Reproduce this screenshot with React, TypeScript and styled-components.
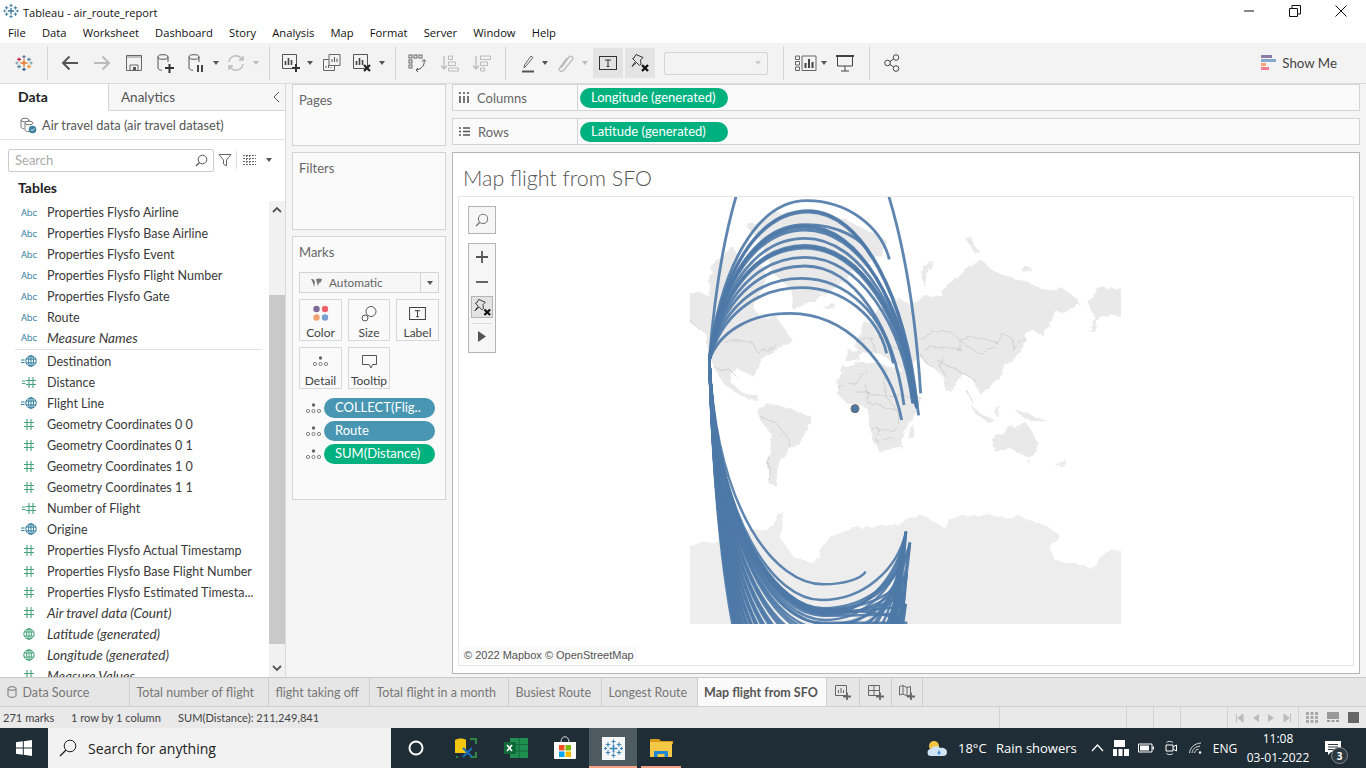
import React from "react";
import styled, { createGlobalStyle } from "styled-components";

const Global = createGlobalStyle`
  html, body { margin: 0; padding: 0; width: 1366px; height: 768px; overflow: hidden; background: #fff; }
  * { box-sizing: border-box; }
`;
const UI = `"Open Sans", "Noto Sans", sans-serif`;
const TB = `Lato, "Open Sans", sans-serif`;

const Page = styled.div`display:flex;flex-direction:column;width:1366px;height:768px;font-family:${TB};color:#333;overflow:hidden;`;
const TitleBar = styled.div`height:21px;flex:none;display:flex;align-items:center;padding-left:3px;font:11.1px ${UI};color:#111;background:#fff;`;
const TitleText = styled.span`margin-left:4px;margin-top:4px;`;
const WinButtons = styled.div`margin-left:auto;margin-right:2px;display:flex;`;
const WinButton = styled.div`width:46px;height:21px;display:flex;align-items:center;justify-content:center;`;
const MenuBar = styled.div`height:22px;flex:none;display:flex;align-items:center;padding-left:8px;gap:16.2px;font:11.2px ${UI};color:#111;background:#fff;`;
const Toolbar = styled.div`height:41px;flex:none;display:flex;align-items:center;padding-left:8px;background:#f3f3f3;border-bottom:1px solid #dcdcdc;`;
const ToolSlot = styled.div<{ $w: number; $ml?: number; $hi?: boolean }>`
  width:${p => p.$w}px;height:30px;flex:none;display:flex;align-items:center;justify-content:center;
  margin-left:${p => p.$ml ?? 0}px;background:${p => (p.$hi ? "#e3e3e3" : "transparent")};
`;
const ToolDivider = styled.div<{ $ml?: number; $mr?: number }>`
  width:1px;height:34px;flex:none;background:#d4d4d4;margin-left:${p => p.$ml ?? 0}px;margin-right:${p => p.$mr ?? 0}px;
`;
const Caret = styled.span<{ $c?: string }>`display:block;width:0;height:0;border-left:3.5px solid transparent;border-right:3.5px solid transparent;border-top:4px solid ${p => p.$c ?? "#555"};`;
const Combo = styled.div`width:104px;height:23px;flex:none;margin-left:9px;border:1px solid #d5d5d5;border-radius:2px;background:#f3f3f3;display:flex;align-items:center;justify-content:flex-end;padding-right:6px;`;
const ShowMe = styled.div`margin-left:auto;margin-right:29px;display:flex;align-items:center;gap:6px;font:13.3px ${TB};color:#444;`;

const Main = styled.div`flex:1;min-height:0;display:flex;background:#f5f5f5;`;
const Sidebar = styled.div`width:286px;flex:none;background:#fff;border-right:1px solid #dadada;display:flex;flex-direction:column;`;
const SideTabs = styled.div`height:27px;flex:none;display:flex;`;
const SideTab = styled.div<{ $on?: boolean }>`
  width:${p => (p.$on ? 108 : 177)}px;display:flex;align-items:center;position:relative;padding-bottom:${p => (p.$on ? 2 : 0)}px;
  padding-left:${p => (p.$on ? 18 : 12)}px;font:${p => (p.$on ? 700 : 400)} ${p => (p.$on ? 14 : 13.5)}px ${TB};
  color:${p => (p.$on ? "#222" : "#555")};background:${p => (p.$on ? "#fff" : "#f6f6f6")};
  border-left:${p => (p.$on ? "none" : "1px solid #d4d4d4")};border-bottom:${p => (p.$on ? "none" : "1px solid #d4d4d4")};
`;
const Collapse = styled.svg`position:absolute;right:5px;top:7px;`;
const SourceRow = styled.div`height:29px;flex:none;display:flex;align-items:center;padding-left:20px;gap:5px;font:12.8px ${TB};color:#555;border-bottom:1px solid #e2e2e2;`;
const SearchRow = styled.div`height:22px;flex:none;margin-top:9px;display:flex;align-items:center;padding-left:8px;`;
const SearchBox = styled.div`width:206px;height:23px;border:1px solid #ccc;border-radius:2px;display:flex;align-items:center;justify-content:space-between;padding:0 5px 0 6px;font:13px ${TB};color:#aaa;`;
const FilterSlot = styled.div`width:22px;display:flex;justify-content:center;`;
const VBar = styled.div`width:1px;height:18px;background:#ddd;`;
const ViewSlot = styled.div`margin-left:6px;display:flex;align-items:center;gap:10px;`;
const TablesHead = styled.div`height:30px;flex:none;padding:8px 0 0 18px;font:700 14px ${TB};color:#222;`;
const ListArea = styled.div`flex:1;min-height:0;display:flex;overflow:hidden;`;
const FieldList = styled.div`width:269px;flex:none;overflow:hidden;`;
const FieldRow = styled.div<{ $it?: boolean }>`
  height:21px;display:flex;align-items:center;padding-top:${p => (p.$it ? 0 : 1)}px;
  font:${p => (p.$it ? "italic 13.6px" : "12.55px")} ${TB};color:#3a3a3a;white-space:nowrap;
`;
const FieldIcon = styled.div`width:47px;flex:none;padding-left:19px;display:flex;align-items:center;justify-content:center;padding-right:8px;`;
const Abc = styled.span`font:9.5px ${UI};color:#2f7d9c;letter-spacing:-.1px;`;
const ListDivider = styled.div`height:1px;margin:1px 7px 0 15px;background:#e2e2e2;`;
const ScrollBar = styled.div`width:16px;flex:none;background:#f1f1f1;display:flex;flex-direction:column;`;
const ScrollEnd = styled.div`height:17px;flex:none;display:flex;align-items:center;justify-content:center;`;
const ScrollGap = styled.div`height:77px;flex:none;`;
const ScrollThumb = styled.div`height:349px;flex:none;background:#c9c9c9;`;
const ScrollFill = styled.div`flex:1;`;

const Shelves = styled.div`width:154px;flex:none;margin-left:6px;display:flex;flex-direction:column;gap:6px;`;
const Card = styled.div<{ $h: number }>`height:${p => p.$h}px;flex:none;border:1px solid #d4d4d4;background:#fafafa;padding:8px 6px;font:13px ${TB};color:#666;`;
const CardTitle = styled.div`height:15px;line-height:15px;`;
const MarkSelect = styled.div`height:21px;margin-top:12px;width:140px;border:1px solid #d4d4d4;background:#f7f7f7;display:flex;align-items:center;font-size:11.8px;color:#666;`;
const MarkSelectLabel = styled.div`flex:1;display:flex;align-items:center;gap:6px;padding-left:11px;height:100%;border-right:1px solid #d4d4d4;`;
const MarkSelectArrow = styled.div`width:17px;display:flex;justify-content:center;`;
const MarkGrid = styled.div`margin-top:6px;display:grid;grid-template-columns:43px 42px 43px;column-gap:6px;row-gap:6px;width:140px;`;
const MarkBtn = styled.div`height:42px;border:1px solid #d8d8d8;background:#fafafa;display:flex;flex-direction:column;align-items:center;padding-top:4px;font:12px ${TB};color:#444;gap:2px;`;
const MarkIcon = styled.div`height:20px;display:flex;align-items:center;justify-content:center;`;
const PillList = styled.div`margin-top:9px;display:flex;flex-direction:column;gap:3px;`;
const PillRow = styled.div`display:flex;align-items:center;height:20px;`;
const PillDots = styled.div`width:25px;flex:none;display:flex;justify-content:center;padding-left:3px;`;
const Pill = styled.div<{ $g?: boolean; $w?: number }>`
  width:${p => (p.$w ? `${p.$w}px` : "111px")};height:20px;border-radius:10px;color:#fff;
  background:${p => (p.$g ? "#00b180" : "#4996b2")};font:13px ${TB};line-height:19px;padding-left:11px;white-space:nowrap;overflow:hidden;
`;
const ShelfPill = styled(Pill)`margin-top:1px;`;

const Right = styled.div`width:908px;flex:none;margin-left:6px;display:flex;flex-direction:column;gap:7px;`;
const Shelf = styled.div`height:27px;flex:none;display:flex;align-items:center;border:1px solid #d4d4d4;background:#fafafa;`;
const ShelfLabel = styled.div`width:125px;height:100%;flex:none;display:flex;align-items:center;gap:8px;padding-left:6px;font:13px ${TB};color:#666;border-right:1px solid #d4d4d4;margin-right:2px;`;
const Viz = styled.div`height:522px;flex:none;border:1px solid #b5b5b5;background:#fff;padding:0 5px 7px 5px;display:flex;flex-direction:column;`;
const VizTitle = styled.div`height:43px;flex:none;padding:12px 0 0 5px;font:300 21.4px ${TB};color:#555;line-height:26px;`;
const Pane = styled.div`flex:1;min-height:0;border:1px solid #e6e6e6;position:relative;overflow:hidden;`;
const MapSvg = styled.svg`display:block;`;
const Land = styled.polygon<{ $s?: boolean }>`fill:${p => (p.$s ? "#ededed" : "#e9e9e9")};`;
const Border = styled.polyline`fill:none;stroke:#c6c6c6;stroke-width:2;`;
const Arc = styled.path<{ $w?: number }>`fill:none;stroke:#4e79a7;stroke-width:${p => p.$w ?? 8.5};opacity:.9;`;
const ControlBtn = styled.div`position:absolute;left:9px;top:9px;width:28px;height:28px;border:1px solid #b5b5b5;background:#f6f6f6;display:flex;align-items:center;justify-content:center;`;
const ControlStack = styled.div`position:absolute;left:9px;top:46px;width:28px;height:110px;border:1px solid #b5b5b5;background:#f6f6f6;display:flex;flex-direction:column;align-items:center;`;
const CtlCell = styled.div`height:25px;display:flex;align-items:center;justify-content:center;flex:none;`;
const CtlPin = styled.div`width:22px;height:22px;flex:none;margin-top:2px;border:1px solid #b5b5b5;background:#e3e3e3;display:flex;align-items:center;justify-content:center;`;
const CtlSep = styled.div`width:20px;height:1px;background:#ddd;margin-top:5px;flex:none;`;
const Attribution = styled.div`position:absolute;left:2px;bottom:2px;padding:2px 3px;background:rgba(250,250,250,.9);font:500 11px "Liberation Sans",Arial,sans-serif;color:#555;`;

const TabBar = styled.div`height:30px;flex:none;display:flex;background:#e6e6e6;border-top:1px solid #c9c9c9;border-bottom:1px solid #d2d2d2;`;
const SheetTab = styled.div<{ $w: number; $on?: boolean }>`
  width:${p => p.$w}px;flex:none;display:flex;align-items:center;gap:6px;padding-left:${p => (p.$on ? 6 : 6.5)}px;white-space:nowrap;
  font:${p => (p.$on ? 700 : 400)} 12.5px ${TB};color:${p => (p.$on ? "#555" : "#777")};
  background:${p => (p.$on ? "#fafafa" : "transparent")};border-right:1px solid #cfcfcf;
`;
const AddTab = styled.div<{ $w: number }>`width:${p => p.$w}px;flex:none;display:flex;align-items:center;justify-content:center;border-right:1px solid #cfcfcf;`;
const StatusBar = styled.div`height:21px;flex:none;display:flex;align-items:center;background:#e9e9e9;font:11.1px ${TB};color:#444;`;
const StatusText = styled.span<{ $w: number; $pl?: number }>`width:${p => p.$w}px;flex:none;white-space:nowrap;padding-left:${p => p.$pl ?? 0}px;`;
const StatusCell = styled.div<{ $w: number }>`width:${p => p.$w}px;height:100%;flex:none;border-left:1px solid #d2d2d2;display:flex;align-items:center;justify-content:center;gap:9px;`;
const Taskbar = styled.div`height:40px;flex:none;display:flex;align-items:stretch;background:#1f2e36;color:#fff;font:13px ${UI};`;
const TaskSlot = styled.div<{ $w: number; $on?: boolean; $u?: boolean }>`
  width:${p => p.$w}px;flex:none;display:flex;align-items:center;justify-content:center;position:relative;
  background:${p => (p.$on ? "#4e5c62" : "transparent")};
  &::after{content:"";display:${p => (p.$u ? "block" : "none")};position:absolute;left:${p => (p.$on ? 0 : 4)}px;right:${p => (p.$on ? 0 : 4)}px;bottom:0;height:2px;background:#f7a184;}
`;
const TaskSearch = styled.div`width:343px;flex:none;background:#f2f2f2;color:#222;display:flex;align-items:center;gap:11px;padding-left:11px;font:14.1px ${UI};`;
const Tray = styled.div`margin-left:auto;display:flex;align-items:center;`;
const TrayText = styled.span<{ $w: number }>`width:${p => p.$w}px;flex:none;white-space:nowrap;`;
const TrayLang = styled.span`width:36px;margin-right:3px;flex:none;font-size:12px;text-align:center;`;
const TrayIcon = styled.div<{ $w: number; $mr?: number }>`width:${p => p.$w}px;flex:none;display:flex;align-items:center;justify-content:center;margin-right:${p => p.$mr ?? 0}px;`;
const Clock = styled.div`width:64px;flex:none;display:flex;flex-direction:column;align-items:center;font-size:12px;line-height:19px;white-space:nowrap;`;
const NotifSlot = styled.div`width:56px;height:40px;flex:none;padding-right:10px;display:flex;align-items:center;justify-content:center;position:relative;`;
const NotifBadge = styled.span`position:absolute;left:21px;top:19px;width:17px;height:17px;border-radius:50%;background:#2b3a41;border:1px solid #888;font:700 10px ${UI};display:flex;align-items:center;justify-content:center;`;

/* ---------- icons ---------- */
const Cross = ({ x, y, r, c, w = 1.2 }: { x: number; y: number; r: number; c: string; w?: number }) => (
  <path d={`M${x - r} ${y}H${x + r}M${x} ${y - r}V${y + r}`} stroke={c} strokeWidth={w} fill="none" />
);
const TableauLogo = ({ s = 16, mono }: { s?: number; mono?: string }) => {
  const c = (v: string) => mono ?? v;
  return (
    <svg width={s} height={s} viewBox="0 0 20 20">
      <Cross x={10} y={10} r={4} c={c("#e8762d")} w={1.7} />
      <Cross x={10} y={3} r={2} c={c("#5b6591")} />
      <Cross x={10} y={17} r={2} c={c("#1f457e")} />
      <Cross x={4.5} y={6} r={2.2} c={c("#c72037")} />
      <Cross x={15.5} y={6} r={2.2} c={c("#59879b")} />
      <Cross x={4.5} y={14} r={2.2} c={c("#5b879b")} />
      <Cross x={15.5} y={14} r={2.2} c={c("#eb912b")} />
      <Cross x={2} y={10} r={1.6} c={c("#7099a6")} />
      <Cross x={18} y={10} r={1.6} c={c("#7099a6")} />
    </svg>
  );
};
const Svg = ({ w = 20, h = 20, children, vb }: { w?: number; h?: number; vb?: string; children: React.ReactNode }) => (
  <svg width={w} height={h} viewBox={vb ?? `0 0 ${w} ${h}`} fill="none">{children}</svg>
);
const Back = ({ c }: { c: string }) => <Svg><path d="M18 10H3M9.5 3.5L3 10l6.5 6.5" stroke={c} strokeWidth="2" /></Svg>;
const Forward = ({ c }: { c: string }) => <Svg><path d="M2 10h15M10.5 3.5L17 10l-6.5 6.5" stroke={c} strokeWidth="2" /></Svg>;
const Save = () => <Svg><path d="M2.5 2.5h15v15h-15z" stroke="#666" /><path d="M3 4h14" stroke="#888" /><path d="M6 17v-5h8v5" stroke="#666" /><path d="M9 14h3v3H9z" fill="#555" /></Svg>;
const Cyl = ({ children }: { children?: React.ReactNode }) => (
  <Svg><ellipse cx="8" cy="4" rx="5" ry="2.3" stroke="#555" /><path d="M3 4v11c0 1.3 2 2.2 4 2.3M13 4v5" stroke="#555" />{children}</Svg>
);
const Refresh = () => <Svg><path d="M3 9a7 7 0 0 1 12-4l2 2M17 11a7 7 0 0 1-12 4l-2-2M17 3v4h-4M3 17v-4h4" stroke="#bbb" strokeWidth="1.4" /></Svg>;
const BarsPlus = ({ x }: { x?: boolean }) => (
  <Svg>
    <path d="M1.5 1.5h14v14h-14z" stroke="#555" />
    <path d="M4.5 12V8M7.5 12V5M10.5 12V7" stroke="#444" strokeWidth="1.6" />
    {x ? <path d="M12 12l6 6M18 12l-6 6" stroke="#222" strokeWidth="2.2" /> : <path d="M11 15h8M15 11v8" stroke="#333" strokeWidth="2" />}
  </Svg>
);
const Dup = () => <Svg><path d="M7 1.5h11v11H7z" stroke="#666" /><path d="M10 9V6M12.5 9V4M15 9V5.5" stroke="#555" /><path d="M7 6.5H1.5v11h11V13" stroke="#666" /><path d="M4 15v-2M6.5 15v-3M9 15v-1" stroke="#666" /></Svg>;
const Swap = () => <Svg>
  {[2, 7, 12].map(x => <rect key={x} x={x} y="2" width="3" height="3" stroke="#666" />)}
  <rect x="2" y="7" width="3" height="3" stroke="#666" />
  <rect x="2" y="12" width="3" height="3" stroke="#666" />
  <path d="M17 7c1 5-2 9-8 10" stroke="#555" /><path d="M15 8.500l2-2 2 2M11 15l-2 2 2 2" stroke="#555" />
</Svg>;
const Sort = ({ desc }: { desc?: boolean }) => <Svg>
  <path d="M4 3v13M1 12.500L4 16l3-3.500" stroke="#bbb" strokeWidth="1.3" />
  {desc
    ? <path d="M8.500 3h10v3.500h-10zM8.500 9h7v3.500h-7zM8.500 15h4v3h-4z" stroke="#bbb" />
    : <path d="M8.500 3h4v3.500h-4zM8.500 9h7v3.500h-7zM8.500 15h10v3h-10z" stroke="#bbb" />}
</Svg>;
const Pen = () => <Svg><path d="M8 13l-2 2 .5-3L13 3l2 1.500-7 8.500z" stroke="#666" /><path d="M4 18.500h12" stroke="#555" strokeWidth="2" /></Svg>;
const Clip = () => <Svg><path d="M6 15l8-11c1.500-2 5 0 3.500 2.500L9 17c-2 3-6 .5-4.500-2L12 5" stroke="#bbb" strokeWidth="1.3" /></Svg>;
const TBox = ({ s = 18 }: { s?: number }) => <Svg w={s} h={s - 4} vb="0 0 18 14"><rect x=".5" y=".5" width="17" height="13" stroke="#333" /><path d="M6 4h6M9 4v6.500M7.500 10.500h3" stroke="#333" /></Svg>;
const PinX = ({ s = 20 }: { s?: number }) => <Svg w={s} h={s} vb="0 0 20 20">
  <path d="M6 1.500l7 3-2.500 2.500.5 4-1.500 1.500-3-3-4.500 4 3.500-5-3-3L4 5z" stroke="#333" fill="none" />
  <path d="M12 12l6 6M18 12l-6 6" stroke="#111" strokeWidth="2.300" />
</Svg>;
const SmallShow = () => <Svg w={22} h={16}>
  <path d="M.5 1h4v3.500h-4zM.5 6.500h4V10h-4zM.5 12h4v3.500h-4z" stroke="#666" />
  <path d="M7 1h14v14.500H7z" stroke="#666" /><path d="M10.500 13V8M14 13V4M17.500 13V7" stroke="#444" strokeWidth="2" />
</Svg>;
const Present = () => <Svg w={20} h={18}><path d="M1 2h18" stroke="#444" strokeWidth="2" /><path d="M2.500 3v9h15V3M10 12v5M6 17h8" stroke="#444" /></Svg>;
const Share = () => <Svg w={16} h={18}><circle cx="3.500" cy="9" r="2.800" stroke="#444" /><circle cx="12" cy="3.500" r="2.800" stroke="#444" /><circle cx="12" cy="14.500" r="2.800" stroke="#444" /><path d="M6 7.500l3.500-2.500M6 10.500l3.500 2.500" stroke="#444" /></Svg>;
const ShowBars = () => <Svg w={15} h={16}><rect y="0" width="11" height="3" fill="#8b7ea6" /><rect y="4" width="15" height="3" fill="#87a9d0" /><rect y="8" width="5" height="3" fill="#f3a672" /><rect y="12" width="8" height="3" fill="#f5808c" /></Svg>;
const SourceIcon = () => <Svg w={17} h={17}>
  <ellipse cx="5" cy="3" rx="4" ry="1.800" stroke="#777" /><path d="M1 3v7c0 1 2 1.700 3 1.700M9 3v3" stroke="#777" />
  <ellipse cx="9" cy="6" rx="4" ry="1.800" stroke="#777" fill="#fff" /><path d="M5 6v7c0 1 2 1.700 4 1.700" stroke="#777" />
  <circle cx="12.500" cy="12.500" r="3.800" fill="#3d7fa1" /><path d="M10.800 12.500l1.300 1.300 2.200-2.300" stroke="#fff" />
</Svg>;
const Lens = ({ s = 13, c = "#555" }: { s?: number; c?: string }) => <Svg w={s} h={s} vb="0 0 13 13"><circle cx="7.500" cy="5.500" r="4.300" stroke={c} /><path d="M4.500 8.500L1 12" stroke={c} strokeWidth="1.300" /></Svg>;
const Funnel = () => <Svg w={14} h={14}><path d="M1 1.500h12L8.500 7v6l-3-2V7z" stroke="#666" /></Svg>;
const ListIco = () => <Svg w={13} h={10}><path d="M0 .5h13M0 3.500h13M0 6.500h13M0 9.500h13M3.500 0v10M6.500 0v10" stroke="#666" strokeDasharray="2 1" /></Svg>;
const Hash = () => <Svg w={10} h={11}><path d="M3 0v11M7 0v11M0 3.500h10M0 7.500h10" stroke="#47a37c" strokeWidth="1.100" /></Svg>;
const Globe = ({ c }: { c: string }) => <Svg w={12} h={12}><circle cx="6" cy="6" r="5.200" stroke={c} /><ellipse cx="6" cy="6" rx="2.400" ry="5.200" stroke={c} /><path d="M.8 4h10.400M.8 8h10.400M6 .8v10.400" stroke={c} /></Svg>;
const Eq = ({ c }: { c: string }) => <Svg w={4} h={5}><path d="M0 1h3.500M0 3.500h3.500" stroke={c} /></Svg>;
const Detail = () => <Svg w={15} h={11}><circle cx="7.500" cy="2" r="1.700" fill="#666" /><circle cx="2" cy="8" r="1.600" stroke="#666" strokeWidth=".8" /><circle cx="7.500" cy="8" r="1.600" stroke="#666" strokeWidth=".8" /><circle cx="13" cy="8" r="1.600" stroke="#666" strokeWidth=".8" /></Svg>;
const MapMini = () => <Svg w={12} h={10}><path d="M0 1l3 .5 1 3L3 9 2 5zM5 1l3-.5 3 .5-1 3-2 1-1 3-1-3z" fill="#777" /></Svg>;
const Dots = () => <Svg w={18} h={18}><circle cx="4.500" cy="4" r="3.200" fill="#7e6a97" /><circle cx="13" cy="4" r="3.200" fill="#f0616c" /><circle cx="4.500" cy="12.500" r="3.200" fill="#f0a270" /><circle cx="13" cy="12.500" r="3.200" fill="#7aa0cf" /></Svg>;
const SizeIco = () => <Svg w={16} h={17}><circle cx="10" cy="6.500" r="5" stroke="#555" /><circle cx="4" cy="13" r="3" stroke="#555" fill="#fafafa" /></Svg>;
const TipIco = () => <Svg w={15} h={14}><path d="M.5.500h14v9h-4l-1.500 3.500-2-3.500H.5z" stroke="#555" /></Svg>;
const Plus = ({ c = "#555", s = 12 }: { c?: string; s?: number }) => <Svg w={s} h={s}><path d={`M0 ${s / 2}H${s}M${s / 2} 0V${s}`} stroke={c} strokeWidth="1.800" /></Svg>;
const AddSheet = () => <Svg w={16} h={15}><path d="M.5.500h11v10H.5z" stroke="#666" /><path d="M3.500 8V5M6 8V3M8.500 8V5" stroke="#666" /><path d="M8 11.500h8M12 7.500v8" stroke="#666" strokeWidth="1.800" /></Svg>;
const AddDash = () => <Svg w={16} h={15}><path d="M.5.500h11v10H.5zM.5 5.500h11M6 .5v10" stroke="#666" /><path d="M8 11.500h8M12 7.500v8" stroke="#666" strokeWidth="1.800" /></Svg>;
const AddStory = () => <Svg w={16} h={15}><path d="M.5 1.500L4 .5l4 2 3.500-1V10l-3.500 1-4-2-3.500 1zM4 .5V9M8 2.500V11" stroke="#666" /><path d="M8 11.500h8M12 7.500v8" stroke="#666" strokeWidth="1.800" /></Svg>;
const Chev = ({ up }: { up?: boolean }) => <Svg w={10} h={7}><path d={up ? "M1 6l4-4 4 4" : "M1 1l4 4 4-4"} stroke="#555" strokeWidth="1.800" /></Svg>;

/* ---------- map data, in the 3x crop space ---------- */
const LAND: string[] = [
  "10,312 55,302 88,318 92,230 120,200 160,170 190,230 240,220 260,260 240,310 215,345 245,390 290,380 322,430 335,450 300,475 270,490 240,510 222,560 170,535 150,575 190,610 240,622 235,632 190,622 130,582 105,535 90,505 75,430 10,385",
  "340,360 335,300 280,250 240,150 200,110 290,70 400,60 500,90 620,150 600,200 520,250 470,290 400,330",
  "430,350 450,338 470,345 455,360",
  "495,512 500,485 530,480 525,450 545,430 540,410 570,395 590,365 620,335 660,325 690,345 730,315 790,320 780,300 820,270 850,240 900,205 930,235 990,265 1050,280 1090,300 1140,290 1190,325 1200,345 1170,365 1130,370 1110,400 1090,435 1060,420 1035,430 1030,470 1000,510 975,520 960,560 935,590 900,615 880,570 850,550 830,575 800,605 790,560 770,540 735,520 715,490 700,530 670,565 660,530 640,520 600,490 580,490 550,490 530,512",
  "1222,335 1250,295 1290,290 1340,300 1340,392 1295,372 1258,382 1240,412 1222,425 1245,385",
  "730,225 765,215 740,250 735,290 725,265",
  "860,150 870,133 880,165 905,190 880,185",
  "1020,235 1040,228 1060,240 1030,245",
  "470,570 490,530 540,515 590,520 640,530 680,550 702,610 725,622 705,680 670,725 665,770 632,775 600,788 578,750 568,700 560,652 500,640 470,610",
  "690,720 705,705 700,745 685,750",
  "235,670 260,640 300,645 395,680 380,730 330,780 300,820 290,890 265,880 265,800 280,740 240,690",
  "870,640 900,670 950,695 930,700 885,670",
  "940,660 965,650 950,680",
  "1000,655 1060,680 1100,690 1040,690",
  "935,745 1000,710 1040,700 1075,760 1050,805 1000,780 945,785",
  "1125,840 1160,805 1150,825",
  "1045,818 1055,815 1052,826",
];
const ANT = "10,1075 75,1055 105,1060 170,1020 270,1020 300,970 310,960 300,1040 340,1100 400,1120 450,1040 520,1015 650,1005 720,975 790,1010 830,980 880,975 950,980 1010,978 1080,1000 1135,1030 1110,1070 1120,1110 1230,1130 1280,1085 1340,1075 1340,1340 10,1340";
const BORDERS: string[] = [
  "840,450 880,440 950,455 945,475 900,490 860,470 840,450",
  "720,450 760,425 810,425 840,450",
  "950,455 965,430 1000,450 1000,480 1030,440",
  "770,510 810,530 850,550 890,575",
  "730,480 790,470 840,480 840,450",
  "720,490 740,520 770,540",
  "790,495 780,530 800,560",
  "90,455 215,455 235,490 290,460",
  "30,390 60,420",
  "105,535 150,540 175,565",
  "470,590 530,580 560,540",
  "560,580 565,640",
  "520,600 610,615 690,620",
  "615,530 615,615 650,660",
  "565,640 650,660 660,710",
  "570,718 630,720 650,710",
  "590,755 640,740",
  "600,720 590,755",
  "240,680 290,700 320,740 330,770",
  "270,740 300,730",
  "270,800 265,870",
  "530,450 600,440 640,470 690,490",
  "570,440 590,490",
  "860,600 880,640",
];
type A = [number, number, number, number];
const X0 = 88, Y0 = 510;
const arcPath = ([ax, ay, ex, ey]: A) => {
  const up = ay < Y0;
  const deep = Math.max(0, Math.min(1, (ay - 1255) / 500));
  const p1x = X0 + (ax - X0) * (up ? 0.12 : 0.07), p1y = Y0 + (ay - Y0) * (up ? 0.6 : 0.68);
  const p2x = ax - (ax - X0) * (up ? 0.5 : 0.42 + deep * 0.2);
  const p3x = ax + (ex - ax) * 0.5;
  const p4x = ex - (ex - ax) * 0.1, p4y = ey - (ey - ay) * 0.55;
  return `M${X0} ${Y0}C${p1x} ${p1y} ${p2x} ${ay} ${ax} ${ay}C${p3x} ${ay} ${p4x} ${p4y} ${ex} ${ey}`;
};
const UPPER: A[] = [
  [402, -300, 722, 610], [380, 32, 628, 208], [385, 62, 712, 650], [385, 66, 708, 640], [375, 104, 572, 198], [375, 108, 705, 640],
  [375, 112, 700, 620], [375, 120, 700, 600], [375, 145, 710, 655], [375, 166, 716, 676], [375, 170, 708, 650], [375, 174, 700, 640], [375, 202, 698, 640],
  [375, 228, 672, 645], [365, 265, 640, 520], [365, 293, 620, 490], [330, 370, 665, 690],
];
const ENDS: [number, number][] = [
  [678, 1025], [690, 1058], [672, 1060], [668, 1080], [665, 1110], [680, 1150], [665, 1165],
  [675, 1200], [655, 1175], [677, 1242], [650, 1270], [640, 1285],
];
const LOWER: A[] = [
  [430, 1183, 557, 1145], [425, 1230, 678, 1025],
  ...Array.from({ length: 46 }, (_, i): A => {
    const e = ENDS[(i * 5 + 1) % ENDS.length];
    return [430 + (i % 3) * 6, 1255 + (i < 9 ? i * 2.4 : 22 + (i - 9) * 13), e[0], e[1]];
  }),
  [425, 1298, 682, 1298],
];

const MapChart = () => (
  <MapSvg width={894} height={467} viewBox="459 197 894 467">
    <defs>
      <clipPath id="plot"><rect x="30" y="20" width="1293" height="1282" /></clipPath>
      <filter id="coast" filterUnits="userSpaceOnUse" x="0" y="0" width="1360" height="1350">
        <feTurbulence type="fractalNoise" baseFrequency="0.035" numOctaves="3" seed="4" />
        <feDisplacementMap in="SourceGraphic" scale="22" />
        <feGaussianBlur stdDeviation="0.8" />
      </filter>
    </defs>
    <g transform="translate(680 190) scale(.33333)" clipPath="url(#plot)">
      <g filter="url(#coast)">
        {LAND.map(p => <Land key={p} points={p} />)}
        <Land $s points={ANT} />
        {BORDERS.map(p => <Border key={p} points={p} />)}
      </g>
      {UPPER.map(a => <Arc key={a.join()} d={arcPath(a)} />)}
      {LOWER.map((a, i) => <Arc key={i} $w={7.5} d={arcPath(a)} />)}
      <circle cx="525" cy="656" r="12" fill="#4e79a7" stroke="#666" strokeWidth="3" />
    </g>
  </MapSvg>
);

/* ---------- data ---------- */
type Kind = "abc" | "hash" | "eqhash" | "eqglobe" | "globe";
const FIELDS_A: [Kind, string, boolean?][] = [
  ["abc", "Properties Flysfo Airline"], ["abc", "Properties Flysfo Base Airline"], ["abc", "Properties Flysfo Event"],
  ["abc", "Properties Flysfo Flight Number"], ["abc", "Properties Flysfo Gate"], ["abc", "Route"], ["abc", "Measure Names", true],
];
const FIELDS_B: [Kind, string, boolean?][] = [
  ["eqglobe", "Destination"], ["eqhash", "Distance"], ["eqglobe", "Flight Line"],
  ["hash", "Geometry Coordinates 0 0"], ["hash", "Geometry Coordinates 0 1"], ["hash", "Geometry Coordinates 1 0"], ["hash", "Geometry Coordinates 1 1"],
  ["eqhash", "Number of Flight"], ["eqglobe", "Origine"], ["hash", "Properties Flysfo Actual Timestamp"], ["hash", "Properties Flysfo Base Flight Number"],
  ["hash", "Properties Flysfo Estimated Timesta..."], ["hash", "Air travel data (Count)", true], ["globe", "Latitude (generated)", true],
  ["globe", "Longitude (generated)", true], ["hash", "Measure Values", true],
];
const KindIcon = ({ k }: { k: Kind }) => {
  if (k === "abc") return <Abc>Abc</Abc>;
  if (k === "hash") return <Hash />;
  if (k === "globe") return <Globe c="#47a37c" />;
  if (k === "eqhash") return <><Eq c="#47a37c" /><Hash /></>;
  return <><Eq c="#2f7d9c" /><Globe c="#2f7d9c" /></>;
};
const Field = ({ f }: { f: [Kind, string, boolean?] }) => (
  <FieldRow $it={f[2]}><FieldIcon><KindIcon k={f[0]} /></FieldIcon>{f[1]}</FieldRow>
);
const MENU = ["File", "Data", "Worksheet", "Dashboard", "Story", "Analysis", "Map", "Format", "Server", "Window", "Help"];
const TABS: [string, number][] = [["Total number of flight", 139], ["flight taking off", 101], ["Total flight in a month", 139], ["Busiest Route", 93], ["Longest Route", 96]];

export default function App() {
  return (
    <Page>
      <Global />
      <TitleBar>
        <TableauLogo s={16} mono="#3c7a9e" />
        <TitleText>Tableau - air_route_report</TitleText>
        <WinButtons>
          <WinButton><Svg w={12} h={12}><path d="M1 6h10" stroke="#111" /></Svg></WinButton>
          <WinButton><Svg w={12} h={12}><path d="M.5 3.500h8v8h-8zM3 3V.5h8.500V9H9" stroke="#111" /></Svg></WinButton>
          <WinButton><Svg w={12} h={12}><path d="M.5.500l11 11M11.500.5l-11 11" stroke="#111" /></Svg></WinButton>
        </WinButtons>
      </TitleBar>
      <MenuBar>{MENU.map(m => <span key={m}>{m}</span>)}</MenuBar>
      <Toolbar>
        <ToolSlot $w={32}><TableauLogo s={18} /></ToolSlot>
        <ToolDivider $ml={7} $mr={6} />
        <ToolSlot $w={32}><Back c="#555" /></ToolSlot>
        <ToolSlot $w={32}><Forward c="#bbb" /></ToolSlot>
        <ToolSlot $w={32}><Save /></ToolSlot>
        <ToolSlot $w={30}><Cyl><path d="M10 15h9M14.500 11v9" stroke="#333" strokeWidth="2" /></Cyl></ToolSlot>
        <ToolSlot $w={32}><Cyl><path d="M12 12v7M16 12v7" stroke="#444" strokeWidth="2" /></Cyl></ToolSlot>
        <ToolSlot $w={8}><Caret /></ToolSlot>
        <ToolSlot $w={32}><Refresh /></ToolSlot>
        <ToolSlot $w={8}><Caret $c="#bbb" /></ToolSlot>
        <ToolDivider $ml={9} $mr={5} />
        <ToolSlot $w={31}><BarsPlus /></ToolSlot>
        <ToolSlot $w={8}><Caret /></ToolSlot>
        <ToolSlot $w={36}><Dup /></ToolSlot>
        <ToolSlot $w={24}><BarsPlus x /></ToolSlot>
        <ToolSlot $w={16}><Caret /></ToolSlot>
        <ToolDivider $ml={5} $mr={5} />
        <ToolSlot $w={32}><Swap /></ToolSlot>
        <ToolSlot $w={34}><Sort /></ToolSlot>
        <ToolSlot $w={30}><Sort desc /></ToolSlot>
        <ToolDivider $ml={8} $mr={8} />
        <ToolSlot $w={27}><Pen /></ToolSlot>
        <ToolSlot $w={8}><Caret /></ToolSlot>
        <ToolSlot $w={32}><Clip /></ToolSlot>
        <ToolSlot $w={8}><Caret $c="#bbb" /></ToolSlot>
        <ToolSlot $w={30} $ml={4} $hi><TBox /></ToolSlot>
        <ToolSlot $w={30} $ml={2} $hi><PinX /></ToolSlot>
        <Combo><Caret $c="#ccc" /></Combo>
        <ToolDivider $ml={15} $mr={7} />
        <ToolSlot $w={29}><SmallShow /></ToolSlot>
        <ToolSlot $w={8}><Caret /></ToolSlot>
        <ToolSlot $w={34}><Present /></ToolSlot>
        <ToolDivider $ml={7} $mr={6} />
        <ToolSlot $w={32}><Share /></ToolSlot>
        <ShowMe><ShowBars />Show Me</ShowMe>
      </Toolbar>
      <Main>
        <Sidebar>
          <SideTabs>
            <SideTab $on>Data</SideTab>
            <SideTab>Analytics
              <Collapse width="7" height="12" viewBox="0 0 7 12" fill="none"><path d="M6 1L1 6l5 5" stroke="#555" /></Collapse>
            </SideTab>
          </SideTabs>
          <SourceRow><SourceIcon />Air travel data (air travel dataset)</SourceRow>
          <SearchRow>
            <SearchBox>Search<Lens /></SearchBox>
            <FilterSlot><Funnel /></FilterSlot>
            <VBar />
            <ViewSlot><ListIco /><Caret /></ViewSlot>
          </SearchRow>
          <TablesHead>Tables</TablesHead>
          <ListArea>
            <FieldList>
              {FIELDS_A.map(f => <Field key={f[1]} f={f} />)}
              <ListDivider />
              {FIELDS_B.map(f => <Field key={f[1]} f={f} />)}
            </FieldList>
            <ScrollBar>
              <ScrollEnd><Chev up /></ScrollEnd>
              <ScrollGap />
              <ScrollThumb />
              <ScrollFill />
              <ScrollEnd><Chev /></ScrollEnd>
            </ScrollBar>
          </ListArea>
        </Sidebar>
        <Shelves>
          <Card $h={62}><CardTitle>Pages</CardTitle></Card>
          <Card $h={78}><CardTitle>Filters</CardTitle></Card>
          <Card $h={264}>
            <CardTitle>Marks</CardTitle>
            <MarkSelect>
              <MarkSelectLabel><MapMini />Automatic</MarkSelectLabel>
              <MarkSelectArrow><Caret /></MarkSelectArrow>
            </MarkSelect>
            <MarkGrid>
              <MarkBtn><MarkIcon><Dots /></MarkIcon>Color</MarkBtn>
              <MarkBtn><MarkIcon><SizeIco /></MarkIcon>Size</MarkBtn>
              <MarkBtn><MarkIcon><TBox s={17} /></MarkIcon>Label</MarkBtn>
              <MarkBtn><MarkIcon><Detail /></MarkIcon>Detail</MarkBtn>
              <MarkBtn><MarkIcon><TipIco /></MarkIcon>Tooltip</MarkBtn>
            </MarkGrid>
            <PillList>
              <PillRow><PillDots><Detail /></PillDots><Pill>COLLECT(Flig..</Pill></PillRow>
              <PillRow><PillDots><Detail /></PillDots><Pill>Route</Pill></PillRow>
              <PillRow><PillDots><Detail /></PillDots><Pill $g>SUM(Distance)</Pill></PillRow>
            </PillList>
          </Card>
        </Shelves>
        <Right>
          <Shelf>
            <ShelfLabel><Svg w={10} h={11}><path d="M1 0v2M1 4v7M5 0v2M5 4v7M9 0v2M9 4v7" stroke="#555" strokeWidth="1.600" /></Svg>Columns</ShelfLabel>
            <ShelfPill $g $w={148}>Longitude (generated)</ShelfPill>
          </Shelf>
          <Shelf>
            <ShelfLabel><Svg w={11} h={9}><path d="M0 1h2M4 1h7M0 4.500h2M4 4.500h7M0 8h2M4 8h7" stroke="#555" strokeWidth="1.500" /></Svg>Rows</ShelfLabel>
            <ShelfPill $g $w={148}>Latitude (generated)</ShelfPill>
          </Shelf>
          <Viz>
            <VizTitle>Map flight from SFO</VizTitle>
            <Pane>
              <MapChart />
              <ControlBtn><Lens s={14} c="#777" /></ControlBtn>
              <ControlStack>
                <CtlCell><Plus /></CtlCell>
                <CtlCell><Svg w={12} h={4}><path d="M0 2h12" stroke="#555" strokeWidth="1.800" /></Svg></CtlCell>
                <CtlPin><PinX s={19} /></CtlPin>
                <CtlSep />
                <CtlCell><Svg w={8} h={11}><path d="M0 0l8 5.500L0 11z" fill="#555" /></Svg></CtlCell>
              </ControlStack>
              <Attribution>© 2022 Mapbox © OpenStreetMap</Attribution>
            </Pane>
          </Viz>
        </Right>
      </Main>
      <TabBar>
        <SheetTab $w={130}>
          <Svg w={10} h={12}><ellipse cx="5" cy="2.500" rx="4" ry="1.800" stroke="#777" /><path d="M1 2.500v7c0 1 1.800 1.800 4 1.800s4-.8 4-1.800v-7" stroke="#777" /></Svg>
          Data Source
        </SheetTab>
        {TABS.map(([t, w]) => <SheetTab key={t} $w={w}>{t}</SheetTab>)}
        <SheetTab $w={129} $on>Map flight from SFO</SheetTab>
        <AddTab $w={33}><AddSheet /></AddTab>
        <AddTab $w={32}><AddDash /></AddTab>
        <AddTab $w={31}><AddStory /></AddTab>
      </TabBar>
      <StatusBar>
        <StatusText $w={71} $pl={3}>271 marks</StatusText>
        <StatusText $w={107}>1 row by 1 column</StatusText>
        <StatusText $w={821}>SUM(Distance): 211,249,841</StatusText>
        <StatusCell $w={127} />
        <StatusCell $w={27} />
        <StatusCell $w={27} />
        <StatusCell $w={47} />
        <StatusCell $w={71}>
          <Svg w={8} h={8}><path d="M.5 0v8M7 0L2 4l5 4z" stroke="#bbb" fill="#bbb" /></Svg>
          <Svg w={6} h={8}><path d="M6 0L0 4l6 4z" fill="#bbb" /></Svg>
          <Svg w={6} h={8}><path d="M0 0l6 4-6 4z" fill="#bbb" /></Svg>
          <Svg w={8} h={8}><path d="M7.500 0v8M1 0l5 4-5 4z" stroke="#bbb" fill="#bbb" /></Svg>
        </StatusCell>
        <StatusCell $w={68}>
          <Svg w={12} h={11}><path d="M0 1.500h3M4.500 1.500h3M9 1.500h3M0 5.500h3M4.500 5.500h3M9 5.500h3M0 9.500h3M4.500 9.500h3M9 9.500h3" stroke="#aaa" strokeWidth="2.800" /></Svg>
          <Svg w={12} h={11}><path d="M0 0h12v7H0z" fill="#999" /><path d="M0 9h3M4.500 9h3M9 9h3" stroke="#999" strokeWidth="2" /></Svg>
          <Svg w={11} h={11}><rect width="11" height="11" fill="#666" /></Svg>
        </StatusCell>
      </StatusBar>
      <Taskbar>
        <TaskSlot $w={48}>
          <Svg w={16} h={16}><path d="M0 2.300L6.800 1.300V7.500H0zM7.800 1.200L16 0v7.500H7.800zM0 8.500h6.800v6.200L0 13.700zM7.800 8.500H16V16l-8.200-1.200z" fill="#fff" /></Svg>
        </TaskSlot>
        <TaskSearch>
          <Svg w={18} h={18}><circle cx="11" cy="7" r="5.800" stroke="#222" /><path d="M6.800 11.200L1 17" stroke="#222" strokeWidth="1.300" /></Svg>
          Search for anything
        </TaskSearch>
        <TaskSlot $w={50}><Svg w={16} h={16}><circle cx="8" cy="8" r="6.500" stroke="#fff" strokeWidth="2" /></Svg></TaskSlot>
        <TaskSlot $w={2} />
        <TaskSlot $w={48}>
          <Svg w={24} h={24}>
            <path d="M0 4c3-2 9-2 11 0v13H0z" fill="#f2c811" /><path d="M15 3h6v5M15 21h6v-5M3 21H1" stroke="#3aa24a" strokeWidth="1.500" />
            <path d="M8 21l9-9M8 12l9 9" stroke="#1d6fb8" strokeWidth="2" />
          </Svg>
        </TaskSlot>
        <TaskSlot $w={49}>
          <Svg w={24} h={22}>
            <rect x="6" y="1" width="18" height="20" fill="#1f8f52" /><path d="M6 7.500h18M6 14h18M15 1v20" stroke="#17663c" />
            <rect y="5" width="12" height="12" fill="#0e6b38" /><path d="M3 8l5 6M8 8l-5 6" stroke="#fff" strokeWidth="1.600" />
          </Svg>
        </TaskSlot>
        <TaskSlot $w={49}>
          <Svg w={24} h={24}>
            <path d="M8 6c0-7 8-7 8 0" stroke="#ddd" />
            <path d="M1 6h22v16a1 1 0 0 1-1 1H2a1 1 0 0 1-1-1z" fill="#fff" />
            <rect x="6" y="9" width="5.500" height="5.500" fill="#f25022" /><rect x="12.500" y="9" width="5.500" height="5.500" fill="#7fba00" />
            <rect x="6" y="15.500" width="5.500" height="5.500" fill="#00a4ef" /><rect x="12.500" y="15.500" width="5.500" height="5.500" fill="#ffb900" />
          </Svg>
        </TaskSlot>
        <TaskSlot $w={48} $on $u>
          <Svg w={23} h={23}>
            <rect width="23" height="23" fill="#f4f6f7" />
            <g transform="translate(1.500 1.500)"><TableauLogo s={20} mono="#3f85b5" /></g>
          </Svg>
        </TaskSlot>
        <TaskSlot $w={48} $u>
          <Svg w={23} h={20}>
            <path d="M0 2a1 1 0 0 1 1-1h8l2 2h12v3H0z" fill="#d99b17" /><rect y="4" width="22" height="15" fill="#f6c848" />
            <path d="M4 19v-5a1 1 0 0 1 1-1h12a1 1 0 0 1 1 1v5h-3.500v-3h-7v3z" fill="#1e88d4" />
          </Svg>
        </TaskSlot>
        <Tray>
          <TrayIcon $w={22} $mr={10}>
            <Svg w={21} h={17}>
              <circle cx="7" cy="6" r="5" fill="#f5c342" /><path d="M4 16a3.500 3.500 0 0 1 0-7c1-3 7-4 9-1 3-1 7 1 7 4s-2 4-4 4z" fill="#cfe3f5" />
              <path d="M12 10l-1.500 3a1.500 1.500 0 0 0 3 0z" fill="#3d8fd9" />
            </Svg>
          </TrayIcon>
          <TrayText $w={38}>18°C</TrayText>
          <TrayText $w={89}>Rain showers</TrayText>
          <TrayIcon $w={24}><Svg w={13} h={8}><path d="M1 7l5.500-6L12 7" stroke="#fff" strokeWidth="1.300" /></Svg></TrayIcon>
          <TrayIcon $w={24}><Svg w={16} h={16}><rect x="1" y="0" width="11" height="7" fill="#fff" /><rect x="0" y="9" width="4" height="7" fill="#fff" /><rect x="5.500" y="9" width="4" height="7" fill="#fff" /><rect x="11" y="9" width="5" height="7" fill="#fff" /></Svg></TrayIcon>
          <TrayIcon $w={26}><Svg w={16} h={10}><path d="M.5 1h13.500v8H.5z" stroke="#fff" /><rect x="2" y="2.500" width="9" height="5" fill="#fff" /><rect x="14.500" y="3.500" width="1.500" height="3" fill="#fff" /></Svg></TrayIcon>
          <TrayIcon $w={24}><Svg w={13} h={16}><path d="M1.500 2.500C3 1 6 1 8 2.500M1.500 13.500c2 1.500 5 1.500 6.500 0" stroke="#ddd" /><path d="M1 5h7v6H1zM8 7l3.500-2v6L8 9" stroke="#fff" /></Svg></TrayIcon>
          <TrayIcon $w={24}><Svg w={13} h={12}><path d="M0.500 11C1 6 5 1.500 12 1M3 11c.5-3.500 3-6.500 8-6.800M5.500 11c.5-2 1.500-3.500 4-4" stroke="#ddd" /><circle cx="11" cy="10.500" r="1.200" fill="#fff" /></Svg></TrayIcon>
          <TrayLang>ENG</TrayLang>
          <Clock><span>11:08</span><span>03-01-2022</span></Clock>
          <NotifSlot>
            <Svg w={16} h={15}><path d="M0 0h16v11H6l-3 3v-3H0z" fill="#fff" /><path d="M3 3.500h10M3 6h10M3 8.500h6" stroke="#2b3a41" /></Svg>
            <NotifBadge>3</NotifBadge>
          </NotifSlot>
        </Tray>
      </Taskbar>
    </Page>
  );
}
